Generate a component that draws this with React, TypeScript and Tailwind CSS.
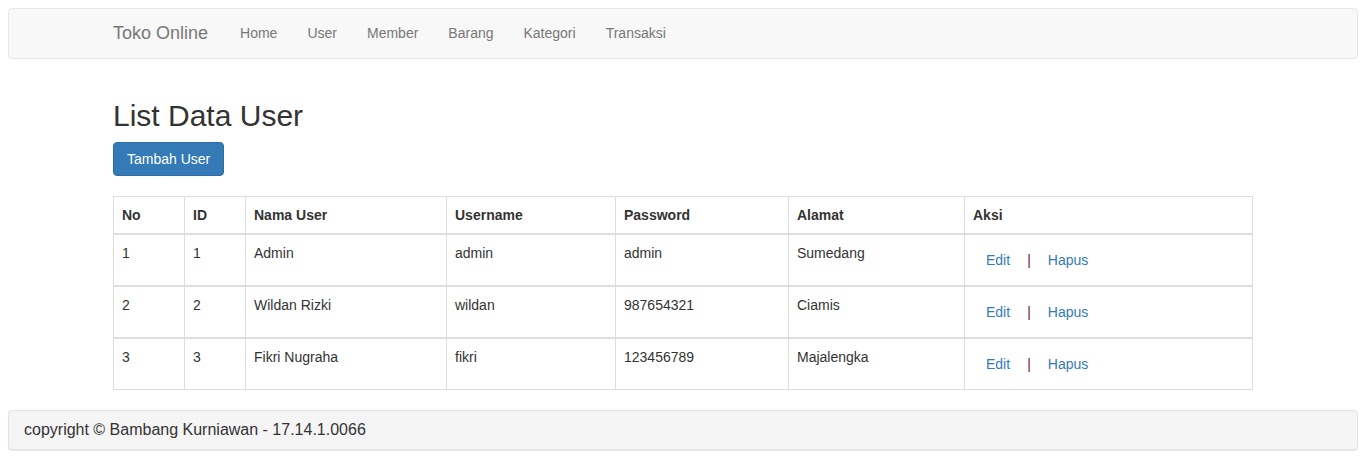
import React from "react";

const navLinks = ["Home", "User", "Member", "Barang", "Kategori", "Transaksi"];

const users = [
  { no: 1, id: 1, nama: "Admin", username: "admin", password: "admin", alamat: "Sumedang" },
  { no: 2, id: 2, nama: "Wildan Rizki", username: "wildan", password: "987654321", alamat: "Ciamis" },
  { no: 3, id: 3, nama: "Fikri Nugraha", username: "fikri", password: "123456789", alamat: "Majalengka" },
];

const columns = [
  { label: "No", width: "w-[71px]" },
  { label: "ID", width: "w-[61px]" },
  { label: "Nama User", width: "w-[201px]" },
  { label: "Username", width: "w-[169px]" },
  { label: "Password", width: "w-[173px]" },
  { label: "Alamat", width: "w-[176px]" },
  { label: "Aksi", width: "" },
];

export default function App() {
  return (
    <div className="min-h-[463px] bg-white p-2 text-[14px] leading-[20px] text-[#333] font-['Liberation_Sans',Arial,sans-serif]">
      {/* Navbar */}
      <nav className="h-[51px] rounded border border-[#e7e7e7] bg-[#f8f8f8]">
        <div className="mx-auto flex w-[1170px] items-center px-[15px]">
          <a className="-ml-[15px] pl-[15px] pr-[17px] pt-[14px] pb-[15px] text-[18px] leading-[20px] text-[#777]">Toko Online</a>
          <ul className="flex">
            {navLinks.map((link) => (
              <li key={link}>
                <a className="block px-[15px] pt-[14px] pb-[15px] text-[#777]">{link}</a>
              </li>
            ))}
          </ul>
        </div>
      </nav>

      {/* Content */}
      <div className="mx-auto w-[1170px] px-[15px] pt-10">
        <h2 className="mb-[10px] text-[30px] leading-[33px] font-normal">List Data User</h2>
        <button className="rounded border border-[#2e6da4] bg-[#337ab7] px-[13px] py-[6px] text-white">
          Tambah User
        </button>

        <table className="mt-5 mb-5 w-full table-fixed border-collapse border border-[#ddd]">
          <thead>
            <tr>
              {columns.map((col) => (
                <th
                  key={col.label}
                  className={`${col.width} border border-b-2 border-[#ddd] px-2 pt-2 pb-2 text-left font-bold`}
                >
                  {col.label}
                </th>
              ))}
            </tr>
          </thead>
          <tbody>
            {users.map((u) => (
              <tr key={u.no}>
                <td className="h-[50px] border border-t-2 border-[#ddd] p-2 align-top">{u.no}</td>
                <td className="border border-t-2 border-[#ddd] p-2 align-top">{u.id}</td>
                <td className="border border-t-2 border-[#ddd] p-2 align-top">{u.nama}</td>
                <td className="border border-t-2 border-[#ddd] p-2 align-top">{u.username}</td>
                <td className="border border-t-2 border-[#ddd] p-2 align-top">{u.password}</td>
                <td className="border border-t-2 border-[#ddd] p-2 align-top">{u.alamat}</td>
                <td className="border border-t-2 border-[#ddd] px-2 py-2 align-top">
                  <div className="flex items-center">
                    <a className="border border-transparent px-3 py-[6px] text-[#337ab7]">Edit</a>
                    <span className="mx-1 text-[#6e1a2e]">|</span>
                    <a className="border border-transparent px-3 py-[6px] text-[#337ab7]">Hapus</a>
                  </div>
                </td>
              </tr>
            ))}
          </tbody>
        </table>
      </div>

      {/* Footer */}
      <footer className="rounded border border-[#e3e3e3] bg-[#f5f5f5] px-[15px] py-[9px] text-[16px] leading-[20px] shadow-[0_1px_1px_rgba(0,0,0,0.1)]">
        copyright © Bambang Kurniawan - 17.14.1.0066
      </footer>
    </div>
  );
}
